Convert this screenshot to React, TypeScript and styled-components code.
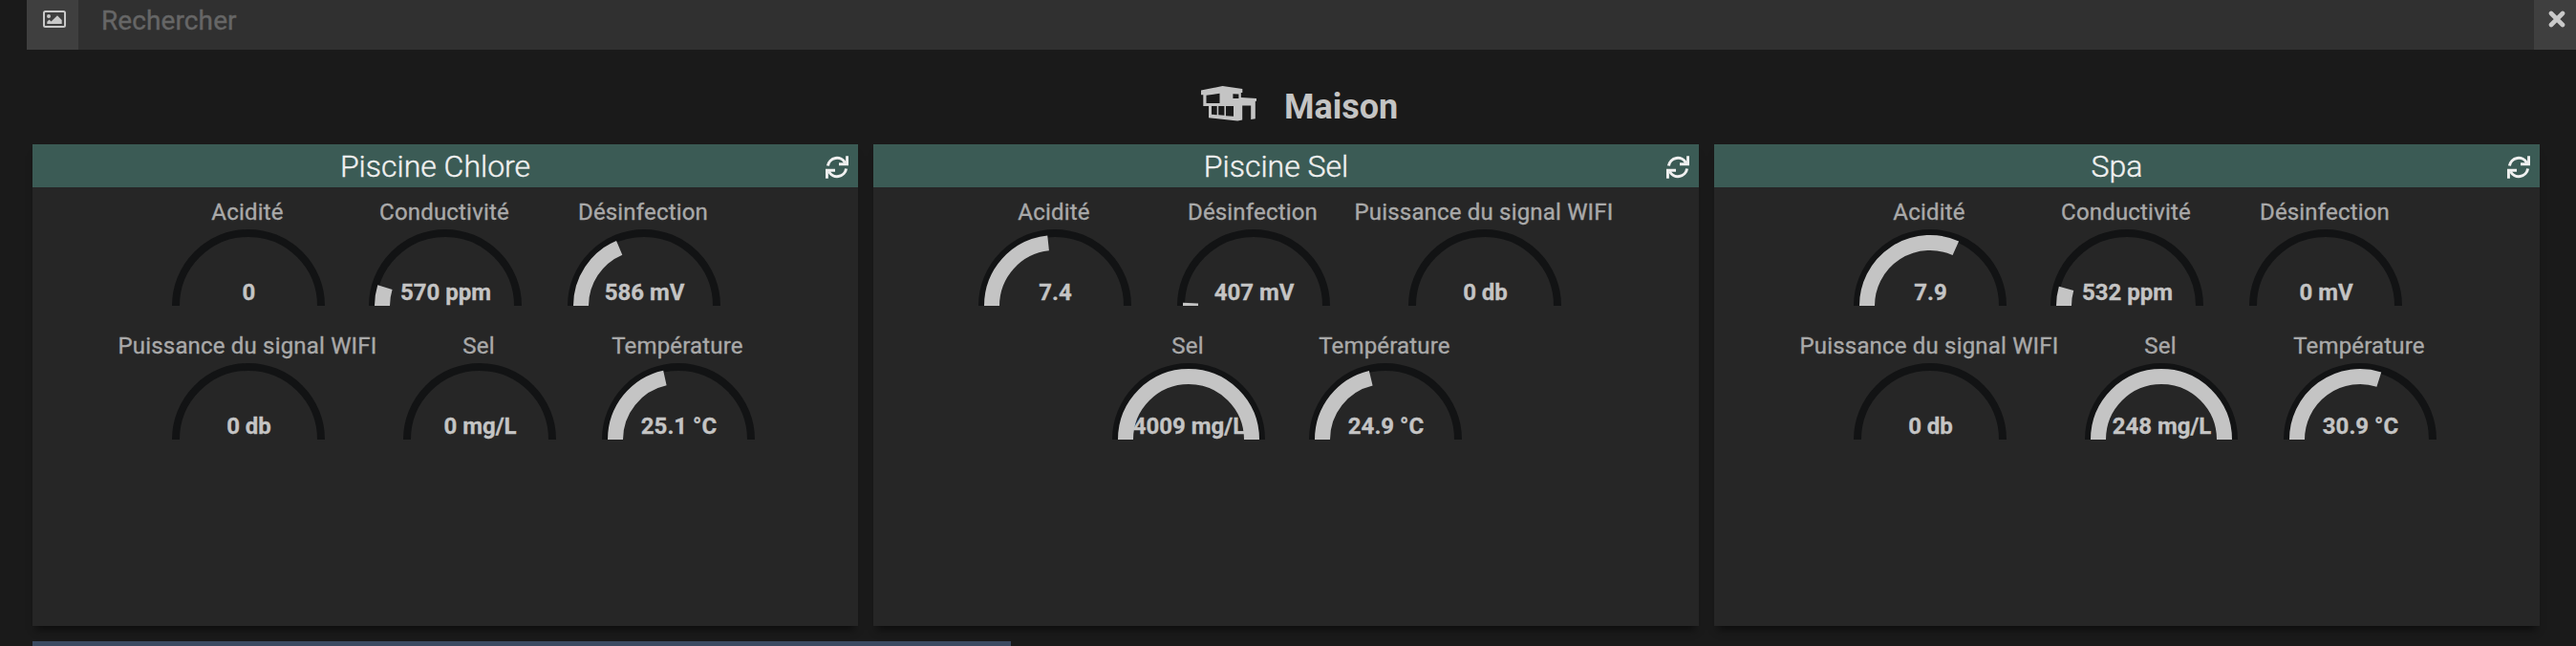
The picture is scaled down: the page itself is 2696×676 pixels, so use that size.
import React from "react";
import styled, { createGlobalStyle } from "styled-components";

const Global = createGlobalStyle`
  * { box-sizing: border-box; }
  html, body { margin: 0; background: #1a1a1a; }
  body { font-family: Roboto, "Liberation Sans", sans-serif; color: #c4c4c4; overflow: hidden; }
`;

const Page = styled.div`
  height: 676px;
  overflow: hidden;
  display: flex;
  flex-direction: column;
`;

const SearchBar = styled.header`
  display: flex;
  height: 52px;
  flex: none;
  margin-left: 28px;
  background: #303030;
`;

const BarButton = styled.button<{ $width: number }>`
  width: ${(p) => p.$width}px;
  height: 52px;
  padding: 11px 0 0 3px;
  border: 0;
  background: #3f3f3f;
  color: #c9c9c9;
  display: flex;
  justify-content: center;
  svg { display: block; }
`;

const SearchInput = styled.div`
  flex: 1;
  padding-left: 24px;
  font-size: 28px;
  line-height: 43px;
  letter-spacing: 0.1px;
  color: #666;
  -webkit-text-stroke: 0.4px #666;
`;

const Title = styled.h1`
  flex: none;
  margin: 0;
  height: 99px;
  padding: 37px 0 0 1257px;
  display: flex;
  gap: 29px;
  font-size: 36px;
  font-weight: 700;
  line-height: 46px;
  svg { display: block; flex: none; margin-top: 1px; }
`;

const Cards = styled.main`
  display: flex;
  flex: none;
  gap: 16px;
  padding-left: 34px;
`;

const Card = styled.section`
  width: 864px;
  height: 504px;
  background: #262626;
  box-shadow: 0 8px 8px -4px rgba(0, 0, 0, 0.5);
`;

const CardHeader = styled.div`
  display: grid;
  grid-template-columns: 1fr 24px;
  align-items: center;
  height: 45px;
  padding: 0 10px 0 13px;
  background: #3b5b55;
  color: #f0f0f0;
`;

const CardTitle = styled.h2`
  margin: 0;
  text-align: center;
  font-size: 32px;
  font-weight: 300;
  line-height: 47px;
  -webkit-text-stroke: 0.4px #f0f0f0;
`;

const GaugeRow = styled.div<{ $lead: number }>`
  display: flex;
  height: 140px;
  padding-left: ${(p) => p.$lead}px;
`;

const GaugeCell = styled.div<{ $wide?: boolean; $tight?: boolean }>`
  flex: none;
  width: ${(p) => (p.$wide ? 276 : 208)}px;
  margin-right: ${(p) => (p.$tight ? -2 : 0)}px;
  display: flex;
  flex-direction: column;
  align-items: center;
  padding-top: 11px;
`;

const Label = styled.div`
  height: 33px;
  padding-right: 2px;
  font-size: 24px;
  line-height: 30px;
  letter-spacing: 0.18px;
  white-space: nowrap;
  color: #a9a9a9;
  -webkit-text-stroke: 0.35px #a9a9a9;
`;

const Dial = styled.svg`
  display: block;
  flex: none;
  font-size: 24px;
  font-weight: 700;
  fill: #c4c4c4;
`;

const NextSection = styled.div`
  flex: none;
  width: 1024px;
  height: 5px;
  margin: 16px 0 0 34px;
  background: #3b4a61;
`;

type Reading = { label: string; value: string; ratio: number };
type Row = { lead: number; items: Reading[] };

function arc(r: number, ratio: number) {
  const a = Math.PI * Math.min(ratio, 1);
  return `M${80 - r} 80A${r} ${r} 0 0 1 ${80 - r * Math.cos(a)} ${80 - r * Math.sin(a)}`;
}

function Gauge({ item, tight }: { item: Reading; tight: boolean }) {
  return (
    <GaugeCell $wide={item.label.length > 20} $tight={tight}>
      <Label>{item.label}</Label>
      <Dial width="160" height="80" viewBox="0 0 160 80">
        <path d={arc(76, 1)} fill="none" stroke="#121314" strokeWidth="8" />
        {item.ratio > 0 && (
          <path d={arc(66, item.ratio)} fill="none" stroke="#c4c4c4" strokeWidth="16" />
        )}
        <text x="80.5" y="74" textAnchor="middle" stroke="#c4c4c4" strokeWidth="0.3">{item.value}</text>
      </Dial>
    </GaugeCell>
  );
}

const ImageIcon = () => (
  <svg width="24" height="18" viewBox="0 0 24 18">
    <rect x="1" y="1" width="22" height="16" rx="1.5" fill="none" stroke="currentColor" strokeWidth="2" />
    <circle cx="6" cy="6" r="2" fill="currentColor" />
    <path d="M4.3 14v-2.2l2.2-2.2 2 2L15 5.3l4.7 4.7v4z" fill="currentColor" />
  </svg>
);

const CloseIcon = () => (
  <svg width="18" height="18" viewBox="0 0 18 18">
    <path d="M3 3l12 12M15 3L3 15" stroke="currentColor" strokeWidth="4.6" strokeLinecap="round" />
  </svg>
);

const RefreshIcon = () => (
  <svg width="24" height="24" viewBox="0 0 24 24" fill="none" stroke="currentColor" strokeWidth="3">
    <path d="M2.4 10.6A9.7 9.7 0 0 1 20.6 7.6" />
    <path d="M14 8.8h8.6V0.2" />
    <path d="M21.6 13.4A9.7 9.7 0 0 1 3.4 16.4" />
    <path d="M10 15.2H1.4V23.8" />
  </svg>
);

const HouseIcon = () => (
  <svg width="58" height="37" viewBox="0 0 58 37" fill="currentColor">
    <path
      fillRule="evenodd"
      d="M0 4.5L22.5 0 43.3 3v4h-1.5v5L58 13v2.8l-1.2.3v18.2l-4.6.6V20.5h-9V35.6l-5 1L8 33.3V21H2.3V9.2H0zM5.5 9.8v8.2H19.5V7.7zM33.4 8.2v4.8h6V8.4zM11 21v8.8l5.7.4v-9.2zM18.2 21v9.3l6.2.5v-9.8zM26 21v10.2l8 .6V21z"
    />
  </svg>
);

const cards: { title: string; rows: Row[] }[] = [
  {
    title: "Piscine Chlore",
    rows: [
      { lead: 122, items: [
        { label: "Acidité", value: "0", ratio: 0 },
        { label: "Conductivité", value: "570 ppm", ratio: 570 / 6000 },
        { label: "Désinfection", value: "586 mV", ratio: 186 / 500 },
      ] },
      { lead: 88, items: [
        { label: "Puissance du signal WIFI", value: "0 db", ratio: 0 },
        { label: "Sel", value: "0 mg/L", ratio: 0 },
        { label: "Température", value: "25.1 °C", ratio: 15.1 / 35 },
      ] },
    ],
  },
  {
    title: "Piscine Sel",
    rows: [
      { lead: 86, items: [
        { label: "Acidité", value: "7.4", ratio: 1.4 / 3 },
        { label: "Désinfection", value: "407 mV", ratio: 7 / 500 },
        { label: "Puissance du signal WIFI", value: "0 db", ratio: 0 },
      ] },
      { lead: 226, items: [
        { label: "Sel", value: "4009 mg/L", ratio: 1 },
        { label: "Température", value: "24.9 °C", ratio: 14.9 / 35 },
      ] },
    ],
  },
  {
    title: "Spa",
    rows: [
      { lead: 122, items: [
        { label: "Acidité", value: "7.9", ratio: 1.9 / 3 },
        { label: "Conductivité", value: "532 ppm", ratio: 532 / 6000 },
        { label: "Désinfection", value: "0 mV", ratio: 0 },
      ] },
      { lead: 88, items: [
        { label: "Puissance du signal WIFI", value: "0 db", ratio: 0 },
        { label: "Sel", value: "248 mg/L", ratio: 1 },
        { label: "Température", value: "30.9 °C", ratio: 20.9 / 35 },
      ] },
    ],
  },
];

export default function App() {
  return (
    <>
      <Global />
      <Page>
        <SearchBar>
          <BarButton $width={54} aria-label="Image"><ImageIcon /></BarButton>
          <SearchInput>Rechercher</SearchInput>
          <BarButton $width={44} aria-label="Fermer"><CloseIcon /></BarButton>
        </SearchBar>
        <Title><HouseIcon /><span>Maison</span></Title>
        <Cards>
          {cards.map((card) => (
            <Card key={card.title}>
              <CardHeader>
                <CardTitle>{card.title}</CardTitle>
                <RefreshIcon />
              </CardHeader>
              {card.rows.map((row, r) => {
                const narrow = row.items.every((i) => i.label.length <= 20);
                return (
                  <GaugeRow key={r} $lead={row.lead}>
                    {row.items.map((item, i) => (
                      <Gauge key={item.label} item={item} tight={narrow && i === 0} />
                    ))}
                  </GaugeRow>
                );
              })}
            </Card>
          ))}
        </Cards>
        <NextSection />
      </Page>
    </>
  );
}
